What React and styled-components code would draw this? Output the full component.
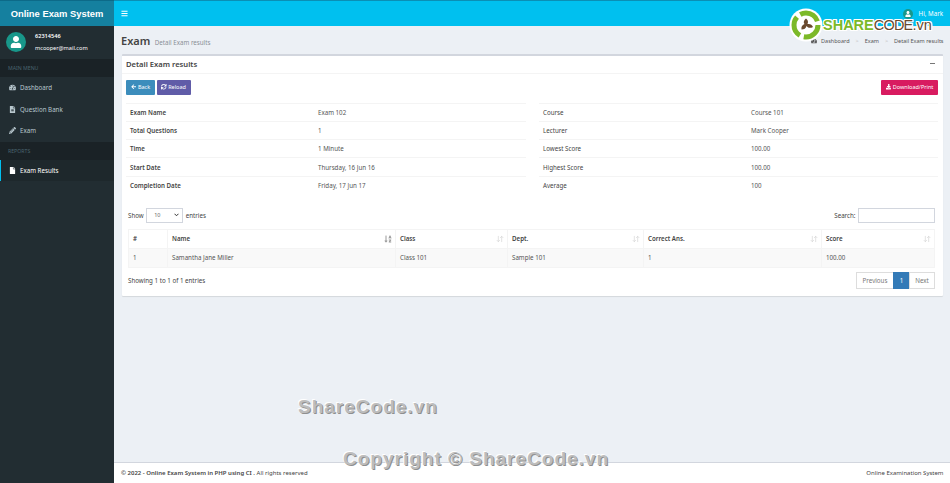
import styled, { createGlobalStyle } from "styled-components";
import { ArrowDownUp } from "lucide-react";
import {
  FaArrowLeft,
  FaBars,
  FaDownload,
  FaFile,
  FaFileAlt,
  FaPencilAlt,
  FaSortAlphaDown,
  FaSync,
  FaTachometerAlt,
  FaUser,
} from "react-icons/fa";

const GlobalStyle = createGlobalStyle`
  html, body { margin: 0; height: 100%; }
  body {
    font-family: "Noto Sans", "Open Sans", sans-serif;
    font-size: 6.2px;
    color: #333;
    background: #ecf0f5;
  }
  * { box-sizing: border-box; }
`;

const Page = styled.div`
  position: relative;
  display: grid;
  grid-template-columns: 114px 1fr;
  grid-template-rows: 26px 1fr;
  width: 950px;
  height: 483px;
  overflow: hidden;
`;

/* header */
const Brand = styled.div`
  display: flex;
  align-items: center;
  justify-content: center;
  background: #15809f;
  border-top: 1px solid #0d6a88;
  color: #fff;
  font-family: "Liberation Sans", sans-serif;
  font-size: 9.4px;
  font-weight: 700;
  white-space: nowrap;
`;

const Topbar = styled.div`
  display: flex;
  align-items: center;
  justify-content: space-between;
  padding: 0 8px 0 7px;
  background: #00c0ef;
  border-top: 1px solid #0a8fb5;
  color: #fff;
  font-size: 7px;
`;

const UserMenu = styled.div`
  display: flex;
  align-items: center;
  gap: 6px;
  font-size: 6.2px;
`;

const Avatar = styled.span`
  display: flex;
  align-items: center;
  justify-content: center;
  width: ${(p) => p.$size}px;
  height: ${(p) => p.$size}px;
  border-radius: 50%;
  background: #18978a;
  color: #fff;
  font-size: ${(p) => p.$size * 0.6}px;
  flex-shrink: 0;
`;

/* sidebar */
const Sidebar = styled.aside`
  background: #222d32;
  color: #b8c7ce;
`;

const UserPanel = styled.div`
  display: flex;
  align-items: center;
  gap: 9px;
  height: 33px;
  padding: 0 0 1px 6px;
  color: #fff;
`;

const UserText = styled.div`
  display: flex;
  flex-direction: column;
  gap: 5px;
  line-height: 7px;
  font-size: 5.6px;
  b { font-weight: 600; }
`;

const MenuHeader = styled.div`
  display: flex;
  align-items: center;
  height: ${(p) => p.$height}px;
  padding-left: 8px;
  background: #1a2226;
  color: #4b646f;
  font-size: 5.2px;
`;

const MenuItem = styled.div`
  display: flex;
  align-items: center;
  gap: 4px;
  height: 21.6px;
  padding-left: ${(p) => (p.$active ? "8px" : "9px")};
  font-size: 6.2px;
  color: ${(p) => (p.$active ? "#fff" : "#b8c7ce")};
  background: ${(p) => (p.$active ? "#1e282c" : "transparent")};
  border-left: ${(p) => (p.$active ? "1px solid #00c0ef" : "0")};
  svg { width: 7px; font-size: 7px; flex-shrink: 0; }
`;

/* main area */
const Main = styled.main`
  display: flex;
  flex-direction: column;
  min-height: 0;
`;

const PageHead = styled.div`
  display: flex;
  align-items: center;
  justify-content: space-between;
  height: 28px;
  padding: 0 7.5px 0 7px;
  flex-shrink: 0;
`;

const PageTitle = styled.div`
  display: flex;
  align-items: baseline;
  gap: 4.5px;
  font-size: 11px;
  font-weight: 600;
  color: #444;
  small { font-size: 6.2px; font-weight: 400; color: #8a8f96; }
`;

const Crumbs = styled.div`
  display: flex;
  align-items: center;
  gap: 6px;
  font-size: 5.5px;
  color: #555;
  margin-top: 2px;
  svg { font-size: 6px; margin-right: 4px; vertical-align: -0.5px; }
  i { font-style: normal; color: #bbb; }
`;

const Box = styled.section`
  margin: 0 8px 0 8px;
  height: 242px;
  flex-shrink: 0;
  background: #fff;
  border-top: 2px solid #d2d6de;
  border-radius: 1px;
  box-shadow: 0 1px 1px rgba(0, 0, 0, 0.1);
`;

const BoxHead = styled.div`
  display: flex;
  align-items: center;
  justify-content: space-between;
  height: 18px;
  padding: 0 8px 2px 4px;
  border-bottom: 1px solid #f4f4f4;
  color: #444;
  font-size: 7.6px;
  font-weight: 600;
`;

const Collapse = styled.span`
  width: 5px;
  height: 1px;
  background: #777;
`;

const BoxBody = styled.div`
  padding: 5px 5px 0 4px;
`;

const Toolbar = styled.div`
  display: flex;
  align-items: center;
  gap: 1.5px;
  height: 16px;
`;

const Btn = styled.button`
  display: flex;
  align-items: center;
  justify-content: center;
  gap: 1.5px;
  width: ${(p) => p.$width}px;
  height: 15px;
  margin-left: ${(p) => (p.$right ? "auto" : "0")};
  padding: 0;
  border: 0;
  border-radius: 1px;
  background: ${(p) => p.$bg};
  color: #fff;
  font-family: inherit;
  font-size: 5.5px;
  svg { font-size: 5.5px; }
`;

const DetailGrid = styled.div`
  display: grid;
  grid-template-columns: 400px 399px;
  column-gap: 13px;
  margin-top: 7.5px;
`;

const DetailTable = styled.div`
  border-top: 1px solid #f4f4f4;
`;

const DetailRow = styled.div`
  display: grid;
  grid-template-columns: ${(p) => p.$label}px 1fr;
  align-items: center;
  height: 18.3px;
  padding-left: 4px;
  border-bottom: 1px solid ${(p) => (p.$last ? "transparent" : "#f4f4f4")};
  font-size: 6.2px;
  color: #555;
  b { font-weight: ${(p) => (p.$plain ? 400 : 600)}; color: #444; }
`;

const Controls = styled.div`
  display: flex;
  align-items: center;
  justify-content: space-between;
  margin-top: 13px;
  padding: 0 3px 0 2px;
  height: 15px;
  font-size: 6.2px;
  color: #444;
`;

const Control = styled.label`
  display: flex;
  align-items: center;
  gap: 2.5px;
`;

const FakeSelect = styled.span`
  display: flex;
  align-items: center;
  justify-content: space-between;
  width: 37px;
  height: 15px;
  padding: 0 3px 0 7px;
  border: 1px solid #d2d6de;
  color: #666;
  font-size: 5.5px;
  svg { display: block; }
`;

const SearchBox = styled.span`
  display: block;
  width: 77px;
  height: 15px;
  border: 1px solid #d2d6de;
`;

const DataTable = styled.div`
  margin: 6px 3px 0 2px;
  border: 1px solid #f4f4f4;
  border-bottom: 0;
`;

const Row = styled.div`
  display: grid;
  grid-template-columns: 38px 228px 112px 136px 178px 1fr;
  height: ${(p) => p.$height}px;
  background: ${(p) => p.$bg || "#fff"};
  border-bottom: 1px solid #f4f4f4;
`;

const Cell = styled.div`
  display: flex;
  align-items: center;
  justify-content: space-between;
  padding: 0 3px 0 4px;
  border-left: ${(p) => (p.$first ? "0" : "1px solid #f4f4f4")};
  font-size: 6.2px;
  font-weight: ${(p) => (p.$head ? 600 : 400)};
  color: ${(p) => (p.$head ? "#444" : "#555")};
  svg { color: ${(p) => (p.$sorted ? "#999" : "#d4d4d4")}; }
`;

const TableFoot = styled.div`
  display: flex;
  align-items: center;
  justify-content: space-between;
  margin-top: 4px;
  padding: 0 3px 0 2px;
  font-size: 6.2px;
  color: #444;
`;

const Pager = styled.div`
  display: flex;
`;

const PageLink = styled.span`
  display: flex;
  align-items: center;
  justify-content: center;
  width: ${(p) => p.$width}px;
  height: 17px;
  margin-left: -1px;
  border: 1px solid ${(p) => (p.$active ? "#337ab7" : "#ddd")};
  background: ${(p) => (p.$active ? "#337ab7" : "#fff")};
  color: ${(p) => (p.$active ? "#fff" : "#777")};
  font-size: 6.2px;
`;

const Footer = styled.footer`
  display: flex;
  align-items: center;
  justify-content: space-between;
  height: 21px;
  margin-top: auto;
  padding: 0 7.5px 0 7px;
  background: #fff;
  border-top: 1px solid #d2d6de;
  color: #444;
  font-size: 6px;
  b { font-weight: 600; }
`;

/* watermarks sit on top of the page */
const LogoMark = styled.div`
  position: absolute;
  top: 8px;
  left: 789px;
  display: flex;
  align-items: center;
  font-family: "Liberation Sans", sans-serif;
  font-size: 14.5px;
  color: #6a4a2e;
  white-space: nowrap;
  text-shadow: 1px 0 #fff, -1px 0 #fff, 0 1px #fff, 0 -1px #fff, 1px 1px #fff, -1px -1px #fff, 1px -1px #fff, -1px 1px #fff;
  b { color: #7cb928; font-weight: 700; }
  span { letter-spacing: -0.8px; }
`;

const Watermark = styled.div`
  position: absolute;
  left: ${(p) => p.$left}px;
  top: ${(p) => p.$top}px;
  font-family: "Liberation Sans", sans-serif;
  font-size: 19px;
  font-weight: 700;
  letter-spacing: 1px;
  white-space: nowrap;
  color: #bdbdbd;
  text-shadow: 1px 1px 0 #8f8f8f, -1px -1px 0 #fff;
`;

const details = [
  { label: 188, rows: [["Exam Name", "Exam 102"], ["Total Questions", "1"], ["Time", "1 Minute"], ["Start Date", "Thursday, 16 Jun 16"], ["Completion Date", "Friday, 17 Jun 17"]] },
  { label: 208, plain: true, rows: [["Course", "Course 101"], ["Lecturer", "Mark Cooper"], ["Lowest Score", "100.00"], ["Highest Score", "100.00"], ["Average", "100"]] },
];

const columns = ["Name", "Class", "Dept.", "Correct Ans.", "Score"];
const result = ["1", "Samantha Jane Miller", "Class 101", "Sample 101", "1", "100.00"];

export default function App() {
  return (
    <Page>
      <GlobalStyle />
      <Brand>Online Exam System</Brand>
      <Topbar>
        <FaBars />
        <UserMenu>
          <Avatar $size={10}><FaUser /></Avatar>
          Hi, Mark
        </UserMenu>
      </Topbar>

      <Sidebar>
        <UserPanel>
          <Avatar $size={20}><FaUser /></Avatar>
          <UserText>
            <b>62314546</b>
            <span>mcooper@mail.com</span>
          </UserText>
        </UserPanel>
        <MenuHeader $height={18}>MAIN MENU</MenuHeader>
        <MenuItem><FaTachometerAlt />Dashboard</MenuItem>
        <MenuItem><FaFileAlt />Question Bank</MenuItem>
        <MenuItem><FaPencilAlt />Exam</MenuItem>
        <MenuHeader $height={18}>REPORTS</MenuHeader>
        <MenuItem $active><FaFile />Exam Results</MenuItem>
      </Sidebar>

      <Main>
        <PageHead>
          <PageTitle>Exam <small>Detail Exam results</small></PageTitle>
          <Crumbs>
            <span><FaTachometerAlt />Dashboard</span><i>&gt;</i>
            <span>Exam</span><i>&gt;</i>
            <span>Detail Exam results</span>
          </Crumbs>
        </PageHead>

        <Box>
          <BoxHead>Detail Exam results<Collapse /></BoxHead>
          <BoxBody>
            <Toolbar>
              <Btn $bg="#3c8dbc" $width={29}><FaArrowLeft />Back</Btn>
              <Btn $bg="#605ca8" $width={34}><FaSync />Reload</Btn>
              <Btn $bg="#d81b60" $width={57} $right><FaDownload />Download/Print</Btn>
            </Toolbar>
            <DetailGrid>
              {details.map((table, i) => (
                <DetailTable key={i}>
                  {table.rows.map(([label, value], j) => (
                    <DetailRow key={label} $label={table.label} $plain={table.plain} $last={j === table.rows.length - 1}>
                      <b>{label}</b>
                      <span>{value}</span>
                    </DetailRow>
                  ))}
                </DetailTable>
              ))}
            </DetailGrid>
            <Controls>
              <Control>
                Show
                <FakeSelect>
                  10
                  <svg width="5" height="4" viewBox="0 0 10 8"><path d="M1 1.5l4 4 4-4" fill="none" stroke="#333" strokeWidth="2" /></svg>
                </FakeSelect>
                entries
              </Control>
              <Control>Search:<SearchBox /></Control>
            </Controls>
            <DataTable>
              <Row $height={19}>
                <Cell $head $first>#</Cell>
                {columns.map((name, i) => (
                  <Cell $head key={name} $sorted={i === 0}>
                    {name}
                    {i === 0 ? <FaSortAlphaDown size={8} /> : <ArrowDownUp size={8} strokeWidth={2} />}
                  </Cell>
                ))}
              </Row>
              <Row $height={19} $bg="#f9f9f9">
                {result.map((value, i) => (
                  <Cell key={i} $first={i === 0}>{value}</Cell>
                ))}
              </Row>
            </DataTable>
            <TableFoot>
              Showing 1 to 1 of 1 entries
              <Pager>
                <PageLink $width={38}>Previous</PageLink>
                <PageLink $width={17} $active>1</PageLink>
                <PageLink $width={26}>Next</PageLink>
              </Pager>
            </TableFoot>
          </BoxBody>
        </Box>

        <Footer>
          <span><b>© 2022 - Online Exam System in PHP using CI .</b> All rights reserved</span>
          <span>Online Examination System</span>
        </Footer>
      </Main>

      <LogoMark>
        <svg width="34" height="34" viewBox="0 0 34 34">
          <circle cx="17" cy="17" r="16.5" fill="#fff" />
          <circle cx="17" cy="17" r="12" fill="none" stroke="#7cb928" strokeWidth="5" strokeDasharray="21 4.1" />
          <path d="M17 10.5c2 1.500 2.500 3.500 1.500 5.500 2.500-.5 4.500.5 5.500 3-2.500 1.500-5 1-6.500-1-.5 2.500-2.500 3.500-5 3.500-.5-2.500.5-4.500 3-5.500-1.500-1.500-.5-4 1.500-5.500z" fill="#6a4a2e" />
        </svg>
        <div><b>SHARE</b><span>CODE</span>.vn</div>
      </LogoMark>
      <Watermark $left={298} $top={396}>ShareCode.vn</Watermark>
      <Watermark $left={343} $top={448}>Copyright © ShareCode.vn</Watermark>
    </Page>
  );
}
